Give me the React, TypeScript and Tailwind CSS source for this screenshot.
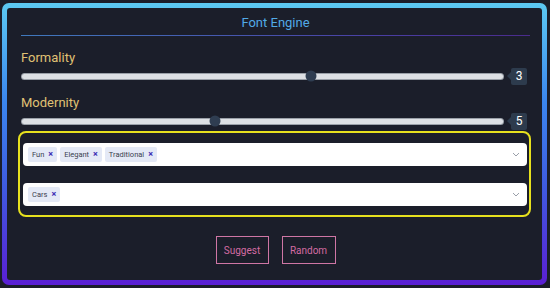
import React from "react";

type SliderProps = { label: string; value: number; pct: number; first?: boolean };

const SliderRow = ({ label, value, pct, first }: SliderProps) => (
  <>
    <div
      className={
        first
          ? "mt-[14px] h-4 text-[13px] leading-4 text-[#e0c274]"
          : "mt-[10px] h-4 text-[13px] leading-4 text-[#e0c274]"
      }
    >
      {label}
    </div>
    <div className="mt-[1px] flex h-[18px] items-center">
      <div className="relative ml-[1px] h-[5px] flex-1 rounded-full bg-[#dde0e4] shadow-[0_0_0_1px_#9aa0a8]">
        <div
          className="absolute top-1/2 h-[11px] w-[11px] -translate-x-1/2 -translate-y-1/2 rounded-full bg-[#2f3d51]"
          style={{ left: `${pct}%` }}
        />
      </div>
      <div className="ml-[4px] mr-[3px] flex items-center">
        <div className="h-0 w-0 border-y-[4px] border-r-[4px] border-y-transparent border-r-[#2d3b4d]" />
        <div className="flex h-[17px] w-[16px] items-center justify-center rounded-[2px] bg-[#2d3b4d] text-[12px] text-white">
          {value}
        </div>
      </div>
    </div>
  </>
);

const Chip = ({ text }: { text: string }) => (
  <span className="flex h-[15px] items-center gap-[4px] rounded-[2px] bg-[#e4e9f6] pl-[4px] pr-[4px] text-[7.5px] text-[#3a4150]">
    {text}
    <span className="text-[9px] font-bold leading-none text-[#3d2fb5]">×</span>
  </span>
);

const TagSelect = ({ tags }: { tags: string[] }) => (
  <div className="flex h-[23px] items-center rounded-[4px] bg-white pl-[5px] pr-[7px]">
    <div className="flex flex-1 gap-[3px]">
      {tags.map((t) => (
        <Chip key={t} text={t} />
      ))}
    </div>
    <svg width="8" height="5" viewBox="0 0 8 5" fill="none">
      <path d="M1 1l3 3 3-3" stroke="#9aa0aa" strokeWidth="1" />
    </svg>
  </div>
);

export default function App() {
  return (
    <div className="h-[288px] w-[550px] bg-[#1b1e2a] pb-[3px] pl-[2px] pr-[3px] pt-[3px] font-['Roboto',sans-serif]">
      <div className="h-full rounded-[7px] bg-[linear-gradient(180deg,#5cc9f2_0%,#3b86ee_35%,#3f5be0_65%,#5a1fd4_100%)] p-[5px]">
        <div className="flex h-full flex-col rounded-[3px] bg-[#1b1e2a] pl-[14px] pr-[12px] pt-[7px]">
          <div className="h-4 text-center text-[13px] leading-4 text-[#52aae6]">Font Engine</div>
          <div className="mt-[4px] h-px bg-[linear-gradient(90deg,#4079bd,#4a3fa4_70%,#4a2b8c)]" />

          <SliderRow label="Formality" value={3} pct={60} first />
          <SliderRow label="Modernity" value={5} pct={40.2} />

          <div className="-ml-[3px] -mr-[1px] mt-[1px] flex flex-col gap-[17px] rounded-[8px] border-2 border-[#e6e01e] pb-[9px] pl-[3px] pr-[2px] pt-[10px]">
            <TagSelect tags={["Fun", "Elegant", "Traditional"]} />
            <TagSelect tags={["Cars"]} />
          </div>

          <div className="mt-[19px] flex justify-center gap-[13px]">
            <button className="h-[28px] w-[53px] border-[1.5px] border-[#cf76a5] text-[10px] text-[#d46ba3]">
              Suggest
            </button>
            <button className="h-[28px] w-[54px] border-[1.5px] border-[#cf76a5] text-[10px] text-[#d46ba3]">
              Random
            </button>
          </div>
        </div>
      </div>
    </div>
  );
}
